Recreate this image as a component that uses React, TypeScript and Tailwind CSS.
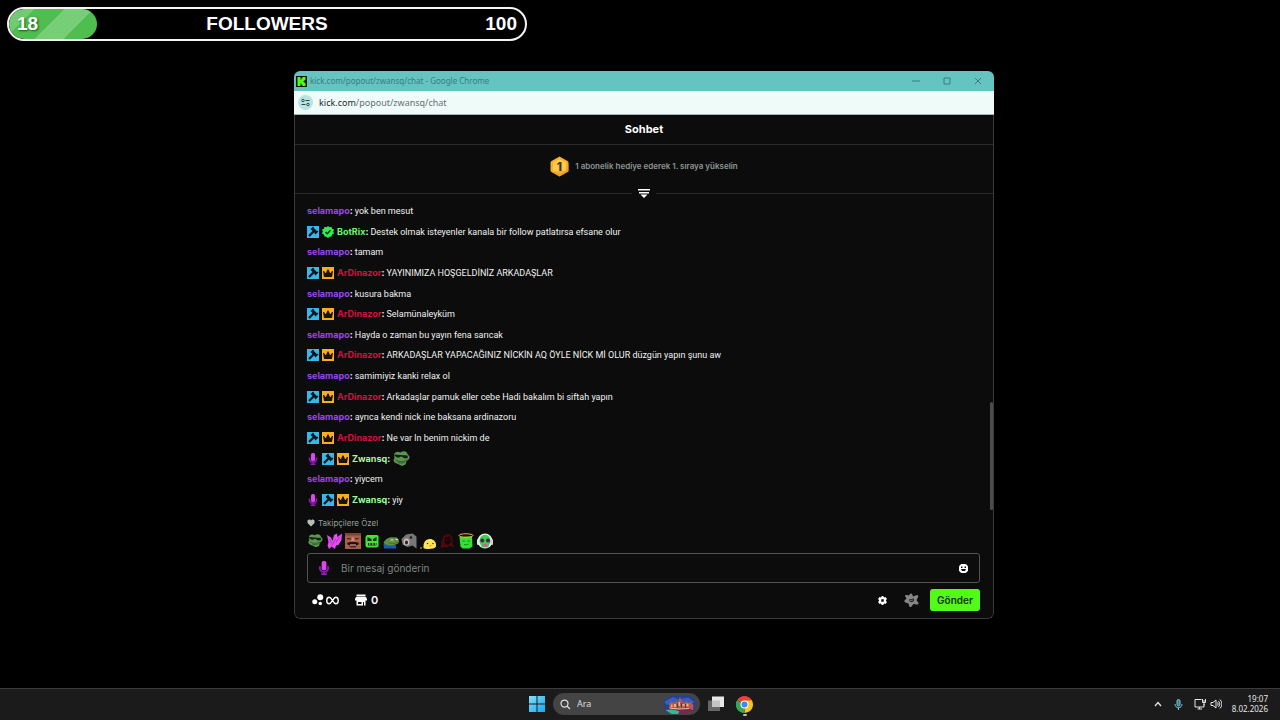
import type { ReactNode } from "react";

type User = "selamapo" | "BotRix" | "ArDinazor" | "Zwansq";

const USERS: Record<User, { color: string; badges: ReactNode }> = {
  selamapo: { color: "text-[#9b45f0]", badges: null },
  BotRix: {
    color: "text-[#6bf76b]",
    badges: (
      <>
        <ModBadge />
        <VerifiedBadge />
      </>
    ),
  },
  ArDinazor: {
    color: "text-[#d30f42]",
    badges: (
      <>
        <ModBadge />
        <CrownBadge />
      </>
    ),
  },
  Zwansq: {
    color: "text-[#a5f9a0]",
    badges: (
      <>
        <MicIcon className="h-3 w-3" />
        <ModBadge />
        <CrownBadge />
      </>
    ),
  },
};

const MESSAGES: { user: User; text: ReactNode }[] = [
  { user: "selamapo", text: "yok ben mesut" },
  { user: "BotRix", text: "Destek olmak isteyenler kanala bir follow patlatırsa efsane olur" },
  { user: "selamapo", text: "tamam" },
  { user: "ArDinazor", text: "YAYINIMIZA HOŞGELDİNİZ ARKADAŞLAR" },
  { user: "selamapo", text: "kusura bakma" },
  { user: "ArDinazor", text: "Selamünaleyküm" },
  { user: "selamapo", text: "Hayda o zaman bu yayın fena sarıcak" },
  { user: "ArDinazor", text: "ARKADAŞLAR YAPACAĞINIZ NİCKİN AQ ÖYLE NİCK Mİ OLUR düzgün yapın şunu aw" },
  { user: "selamapo", text: "samimiyiz kanki relax ol" },
  { user: "ArDinazor", text: "Arkadaşlar pamuk eller cebe Hadi bakalım bi siftah yapın" },
  { user: "selamapo", text: "ayrıca kendi nick ine baksana ardinazoru" },
  { user: "ArDinazor", text: "Ne var ln benim nickim de" },
  { user: "Zwansq", text: <Frog className="h-[18px] w-[18px]" /> },
  { user: "selamapo", text: "yiycem" },
  { user: "Zwansq", text: "yiy" },
];

function ModBadge() {
  return (
    <svg className="h-3 w-3 shrink-0" viewBox="0 0 24 24" aria-hidden="true">
      <path d="M0 0h24v24H0z" fill="#35b8ea" />
      <path d="M4 20 14 10" stroke="#07151d" strokeWidth="4.500" />
      <path d="M10.500 5 19 13.500" stroke="#07151d" strokeWidth="6" />
      <path d="m8 7 5-5M16 16l6-6" stroke="#07151d" strokeWidth="2.500" />
    </svg>
  );
}

function CrownBadge() {
  return (
    <svg className="h-3 w-3 shrink-0" viewBox="0 0 24 24" aria-hidden="true">
      <path d="M0 0h24v24H0z" fill="#fbae1c" />
      <path d="M2 8h2l3 4h1l3-7h2l3 7h1l3-4h2l-1 6-1 6H4L3 14z" fill="#1b1204" />
    </svg>
  );
}

function VerifiedBadge() {
  return (
    <svg className="h-3 w-3 shrink-0" viewBox="0 0 24 24" aria-hidden="true">
      <path d="m12 0 3 2.500 4-1 1 4 4 1.500-1.500 4L24 15l-4 2-1 4-4 .500L12 24l-3-2.500L5 21l-1-4-4-2 1.500-4L0 7l4-1.500 1-4 4 1z" fill="#2bee55" />
      <path d="m7 12 3.500 3.500L17 8.500" fill="none" stroke="#08350f" strokeWidth="3" />
    </svg>
  );
}

function MicIcon({ className }: { className: string }) {
  return (
    <svg className={`${className} shrink-0`} viewBox="0 0 24 24" aria-hidden="true">
      <path d="M5 9v5l3 4h8l3-4V9" fill="none" stroke="#8d1bb5" strokeWidth="3" />
      <path d="M10.500 17h3v4H17v3H7v-3h3.500z" fill="#8d1bb5" />
      <rect x="8" y="0" width="8" height="16" rx="3" fill="#dc48ee" />
    </svg>
  );
}

function Frog({ className }: { className: string }) {
  return (
    <svg className={className} viewBox="0 0 36 36" aria-hidden="true">
      <path d="M4 9C6 3 12 2 17 5c5-4 13-3 14 3l4 5c1 4-3 7-6 9l-2 7-7 3-8-4C6 26 3 24 3 20l2-4z" fill="#5b9650" />
      <path d="M3 9l28 2 1 4c-4 3-9 2-11-1l-4-1c-2 3-7 3-10 0z" fill="#132015" />
      <path d="M7 20c8 5 16 4 26-1M12 25c5 2 10 1 14-1" fill="none" stroke="#34592c" strokeWidth="2" />
    </svg>
  );
}

const EMOTES: { name: string; art: ReactNode }[] = [
  { name: "Havalı kurbağa", art: <Frog className="h-full w-full" /> },
  {
    name: "Kelebek",
    art: (
      <svg viewBox="0 0 32 32">
        <path d="M2 4l8 5 3 7 3-12 6-3 1 7 9-7-1 13-6 10-5 1-2 7-7-5-5 5-3-7 2-6z" fill="#e44cf0" />
        <path d="M12 25 19 12M7 12l4 9M27 8l-7 11" stroke="#a833b5" strokeWidth="2" />
      </svg>
    ),
  },
  {
    name: "Gülen adam",
    art: (
      <svg viewBox="0 0 32 32">
        <path d="M0 0h32v32H0z" fill="#a45f4e" />
        <path d="M0 0h32v5H0z" fill="#7a463a" />
        <path d="M4 11l8 1M19 12l8-1" stroke="#35150f" strokeWidth="2" />
        <path d="M14 9h4l2 8h-8z" fill="#cf8770" />
        <path d="M4 20q12-5 24 0l-2 4H6z" fill="#28100e" />
        <path d="M8 24h16l-3 5H11z" fill="#5d1f1c" />
        <path d="M10 23h12v2H10z" fill="#dbbfae" />
      </svg>
    ),
  },
  {
    name: "Kızgın küp",
    art: (
      <svg viewBox="0 0 32 32">
        <path d="M6 4h21l2 3v20l-4 2H6l-3-3V8z" fill="#3fe637" />
        <path d="M7 8l8 4v4H7zM25 8l-7 4v4h7zM8 20h17v5H8z" fill="#092c0b" />
        <path d="M10 21h3v2h-3zM16 21h3v2h-3zM22 21h2v2h-2z" fill="#e8ffe8" />
      </svg>
    ),
  },
  {
    name: "Üzgün kurbağa",
    art: (
      <svg viewBox="0 0 32 32">
        <path d="M1 22c6-4 13-3 25 3v6H2z" fill="#1c58b4" />
        <path d="M1 20C4 12 13 7 22 9c7-2 10 3 10 9-2 6-18 9-27 5z" fill="#5b923f" />
        <path d="M15 13h6v2h-6zM25 12h5v2h-5z" fill="#d5decb" />
        <path d="M11 20q9 3 20-1" stroke="#8a4c35" strokeWidth="2" fill="none" />
      </svg>
    ),
  },
  {
    name: "Bağıran balık",
    art: (
      <svg viewBox="0 0 32 32">
        <path d="M1 12 10 3l13-2 8 6v24l-8-6-10 3-10-5z" fill="#77777a" />
        <ellipse cx="11" cy="18" rx="6" ry="7" fill="#c9b8b8" />
        <ellipse cx="11" cy="19" rx="3" ry="4" fill="#301d20" />
        <circle cx="20" cy="9" r="2.500" fill="#18181a" />
      </svg>
    ),
  },
  {
    name: "Civciv",
    art: (
      <svg viewBox="0 0 32 32">
        <path d="M7 30C6 19 11 12 20 12c8 0 13 7 12 15-3 6-21 6-25 3z" fill="#ffe552" />
        <circle cx="15" cy="21" r="1.500" fill="#35280c" />
        <circle cx="26" cy="21" r="1.500" fill="#35280c" />
        <path d="M18 24h6l-3 3z" fill="#ef9a2c" />
        <circle cx="2" cy="30" r="1.500" fill="#ffe552" />
      </svg>
    ),
  },
  {
    name: "Kırmızı kukuleta",
    art: (
      <svg viewBox="0 0 32 32">
        <path d="M3 29c2-9 1-12 4-19C9 4 15 1 21 3c7 3 7 12 6 17l4 9-9-3-9 3z" fill="#4c070f" />
        <path d="M12 9l10-2 3 10-7 7-7-4z" fill="#140305" />
        <path d="M14 14h2M21 14h2" stroke="#7c0d1a" strokeWidth="2" />
      </svg>
    ),
  },
  {
    name: "Melek",
    art: (
      <svg viewBox="0 0 32 32">
        <path d="M3 8l25-1 1 20-6 4H9l-4-4z" fill="#35df35" />
        <ellipse cx="16" cy="5" rx="14" ry="3.500" fill="none" stroke="#e2b650" strokeWidth="2" />
        <path d="M9 16h5M19 16h5M12 23q5 2 9-1" stroke="#148a1c" strokeWidth="2" fill="none" />
      </svg>
    ),
  },
  {
    name: "Kulaklıklı",
    art: (
      <svg viewBox="0 0 32 32">
        <circle cx="16" cy="16" r="15" fill="#e7f4e9" />
        <path d="M7 8q9-9 18 0l3 9-6 12H10L4 17z" fill="#39cf4f" />
        <circle cx="10.500" cy="15" r="4" fill="#51204e" />
        <circle cx="22" cy="15" r="4" fill="#51204e" />
        <path d="M12 22h9l-2 6h-5z" fill="#e84fad" />
        <rect x="0" y="12" width="5" height="12" rx="2" fill="#d0f5df" />
        <rect x="27" y="12" width="5" height="12" rx="2" fill="#e8c2e3" />
      </svg>
    ),
  },
];

function GoalBar() {
  return (
    <section
      aria-label="Followers"
      className="relative grid h-[34px] w-[520px] max-w-full grid-cols-[1fr_auto_1fr] items-center overflow-hidden rounded-full border-2 border-[#f4f4f4] bg-black px-2 text-[19px] leading-6 font-bold text-white"
      style={{ fontFamily: '"Liberation Sans", Arial, sans-serif' }}
    >
      <div className="absolute inset-y-0 left-0 w-[88px] rounded-full bg-[repeating-linear-gradient(135deg,#72ca72_0px,#72ca72_18px,#4fbd50_18px,#4fbd50_39px,#76cf76_39px,#76cf76_60px,#4fbd50_60px,#4fbd50_81px)]" />
      <span className="relative [text-shadow:1px_1px_2px_#1c551c]">18</span>
      <span className="relative">FOLLOWERS</span>
      <span className="relative text-right">100</span>
    </section>
  );
}

function TitleBar() {
  return (
    <header style={{ fontFamily: '"Noto Sans", "Open Sans", sans-serif' }}>
      <div className="flex h-5 items-center bg-[#65c3c0] pr-px pl-0.5 text-[#34817f]">
        <svg className="mr-[3px] h-[11px] w-[11px]" viewBox="0 0 22 22" aria-hidden="true">
          <path d="M0 0h22v22H0z" fill="#061507" />
          <path d="M3 2h6v5h2V4h2V2h6v6h-2v2h-2v2h2v2h2v6h-6v-2h-2v-3H9v5H3z" fill="#53fc18" />
        </svg>
        <span className="text-[8px] leading-3">kick.com/popout/zwansq/chat - Google Chrome</span>
        <div className="ml-auto flex">
          <button aria-label="Simge durumuna küçült" className="flex h-5 w-[31px] items-center justify-center">
            <svg className="h-2 w-2" viewBox="0 0 8 8"><path d="M0 4h8" stroke="currentColor" /></svg>
          </button>
          <button aria-label="Ekranı kapla" className="flex h-5 w-[31px] items-center justify-center">
            <svg className="h-2 w-2" viewBox="0 0 8 8"><path d="M1 1h6v6H1z" fill="none" stroke="currentColor" /></svg>
          </button>
          <button aria-label="Kapat" className="flex h-5 w-[31px] items-center justify-center">
            <svg className="h-2 w-2" viewBox="0 0 8 8"><path d="m1 1 6 6M7 1 1 7" stroke="currentColor" /></svg>
          </button>
        </div>
      </div>
      <div className="flex h-6 items-center gap-1.5 border-b border-[#9fb8b3] bg-[#effbf9] px-1 text-[9px] leading-4 text-[#66716f]">
        <button aria-label="Site bilgileri" className="flex h-[15px] w-[15px] items-center justify-center rounded-full bg-[#b9e3df]">
          <svg className="h-[9px] w-[9px]" viewBox="0 0 18 18" fill="none" stroke="#254d4d" strokeWidth="2">
            <circle cx="4" cy="5" r="2.500" />
            <path d="M9 5h8M1 13h8" />
            <circle cx="14" cy="13" r="2.500" />
          </svg>
        </button>
        <span>
          <span className="text-[#202827]">kick.com</span>/popout/zwansq/chat
        </span>
      </div>
    </header>
  );
}

function Leaderboard() {
  return (
    <section className="flex h-[42px] items-center justify-center gap-1.5 text-[8px] leading-4 font-semibold text-[#8e9696]">
      <svg className="h-[21px] w-[19px]" viewBox="0 0 38 42" aria-hidden="true">
        <path d="m19 1 16 9q2 1 2 3v16q0 2-2 3l-16 9-16-9q-2-1-2-3V13q0-2 2-3z" fill="#f6ae27" />
        <path d="m19 6 13 7v16l-13 7-13-7V13z" fill="#ffcb4d" />
        <path d="M37 29q0 2-2 3l-16 9-16-9 29-3 5-14z" fill="#e99a1c" opacity=".6" />
        <text x="19" y="30" textAnchor="middle" fontSize="24" fontWeight="800" fill="#48300b">1</text>
      </svg>
      <span>1 abonelik hediye ederek 1. sıraya yükselin</span>
    </section>
  );
}

function Composer() {
  return (
    <form className="pr-[13px] pl-3" onSubmit={(e) => e.preventDefault()}>
      <div className="flex items-center gap-[3px] text-[8px] leading-3 text-[#9a9d9d]">
        <svg className="h-2 w-2" viewBox="0 0 16 16" fill="#b9bcbc" aria-hidden="true">
          <path d="M8 15 1 8V3l3-2h2l2 2 2-2h2l3 2v5z" />
        </svg>
        Takipçilere Özel
      </div>
      <div className="mt-1 flex w-[186px] justify-between">
        {EMOTES.map((emote) => (
          <button key={emote.name} type="button" aria-label={emote.name} className="h-4 w-4">
            {emote.art}
          </button>
        ))}
      </div>
      <div className="mt-1 flex h-[30px] items-center rounded-[3px] border border-[#525454] px-[9px]">
        <MicIcon className="h-3.5 w-3.5" />
        <input
          aria-label="Bir mesaj gönderin"
          placeholder="Bir mesaj gönderin"
          className="ml-2.5 h-6 min-w-0 flex-1 bg-transparent text-[10px] text-white outline-none placeholder:text-[#808585]"
        />
        <button type="button" aria-label="İfadeler" className="mr-0.5">
          <svg className="h-[9px] w-[9px]" viewBox="0 0 18 18">
            <path d="M5 0h8l3 2 2 3v8l-2 3-3 2H5l-3-2-2-3V5l2-3z" fill="#fff" />
            <path d="M4 5h3v3H4zM11 5h3v3h-3zM4 10h10l-2 4H6z" fill="#0b0c0b" />
          </svg>
        </button>
      </div>
      <div className="mt-1.5 flex h-[22px] items-center text-white">
        <svg className="ml-[5px] h-3 w-3" viewBox="0 0 24 24" fill="currentColor" aria-hidden="true">
          <circle cx="16.500" cy="6.500" r="6" />
          <circle cx="5.500" cy="15.500" r="5" />
          <circle cx="16.500" cy="19" r="3.500" />
        </svg>
        <svg className="ml-0.5 h-[9px] w-[13px]" viewBox="0 0 26 18" fill="none" stroke="currentColor" strokeWidth="2.800" role="img" aria-label="Sınırsız">
          <path d="M13 9C10.500 5 9 2.500 6.500 2.500a5 6.500 0 0 0 0 13C9 15.500 10.500 13 13 9s4-6.500 6.500-6.500a5 6.500 0 0 1 0 13C17 15.500 15.500 13 13 9z" />
        </svg>
        <svg className="ml-4 h-3 w-3" viewBox="0 0 24 24" fill="currentColor" fillRule="evenodd" aria-hidden="true">
          <path d="M3 1h18v4H3zM2 6h20l2 4v3H0v-3zM3 13h18v10H3zM6 16v4h7v-4zM16 16v7h2v-7z" />
        </svg>
        <span className="ml-1 text-[11px] leading-4 font-semibold">0</span>
        <button type="button" aria-label="Sohbet ayarları" className="ml-auto">
          <svg className="h-[9px] w-[9px]" viewBox="0 0 18 18" fill="currentColor" fillRule="evenodd">
            <path d="M7 0h4v2l2 1 2-1 3 4-2 2v2l2 2-3 4-2-1-2 1v2H7v-2l-2-1-2 1-3-4 2-2V8L0 6l3-4 2 1 2-1zM6.500 6.500v5h5v-5z" />
          </svg>
        </button>
        <button type="button" aria-label="Moderatör araçları" className="ml-[17px]">
          <svg className="h-[15px] w-[15px]" viewBox="0 0 30 30">
            <path d="M11 3q4-4 6 1l1 3 8-3q4 1 2 5l-3 5 4 6q1 4-4 3l-6-1-4 5q-4 3-5-2l-1-4-6-2q-4-2-1-5l3-3-3-5q0-3 4-2l4 1z" fill="#858787" />
            <path d="m10 13 10-2q1 6-4 7-5 1-6-5z" fill="#161717" />
            <path d="m12 14 7-1-1 2-5 1z" fill="#858787" />
          </svg>
        </button>
        <button type="submit" className="ml-[11px] h-[22px] w-[50px] rounded-[3px] bg-[#53fc18] text-[10px] leading-4 font-semibold text-[#0c3202]">
          Gönder
        </button>
      </div>
    </form>
  );
}

function ChatWindow() {
  return (
    <main
      className="w-[700px] max-w-full overflow-hidden rounded-md"
      style={{ fontFamily: 'Inter, "Liberation Sans", sans-serif' }}
    >
      <TitleBar />
      <div className="relative rounded-b-md border-x border-b border-[#3a3c3c] bg-[#0b0c0b] pb-[7px]">
        <h1 className="h-[30px] border-b border-[#2a2c2c] text-center text-[11px] leading-7 font-bold text-white">Sohbet</h1>
        <Leaderboard />
        <div className="flex h-3 items-center gap-1.5">
          <hr className="flex-1 border-[#2a2c2c]" />
          <button aria-label="Sıralamayı genişlet" className="text-white">
            <svg className="h-3 w-3" viewBox="0 0 12 12" fill="currentColor">
              <path d="M0 2h12v1.500H0zM1 5h10v1.500H1zM2.500 7.500h7L6 11z" />
            </svg>
          </button>
          <hr className="flex-1 border-[#2a2c2c]" />
        </div>
        <ul className="mt-1 flex h-[305px] flex-col justify-between pr-[13px] pl-3 text-[9px] leading-4 text-[#f1f2f2]">
          {MESSAGES.map(({ user, text }, i) => (
            <li key={i} className="flex h-4 items-center">
              <span className="flex items-center gap-[3px]">
                {USERS[user].badges}
                <span className="font-bold">
                  <span className={USERS[user].color}>{user}</span>:
                </span>
              </span>
              <span className="ml-0.5 font-[Roboto]">{text}</span>
            </li>
          ))}
        </ul>
        <div className="mt-[9px]">
          <Composer />
        </div>
        <div className="absolute right-0 bottom-[108px] h-[108px] w-[3px] rounded-full bg-[#4b4d4d]" />
      </div>
    </main>
  );
}

function Taskbar() {
  return (
    <footer
      className="mt-auto grid h-8 grid-cols-[1fr_auto_1fr] items-center border-t border-[#3c3c3c] bg-[#1b1b1b] pb-px text-[#e6e6e6]"
      style={{ fontFamily: '"Noto Sans", "Open Sans", sans-serif' }}
    >
      <div />
      <div className="flex items-center pl-0.5">
        <button aria-label="Başlat">
          <svg className="h-4 w-4" viewBox="0 0 32 32">
            <defs>
              <linearGradient id="start" x1="0" y1="0" x2="1" y2="1">
                <stop offset="0" stopColor="#83e1fb" />
                <stop offset="1" stopColor="#18a6ed" />
              </linearGradient>
            </defs>
            <path d="M0 0h15v15H0zM17 0h15v15H17zM0 17h15v15H0zM17 17h15v15H17z" fill="url(#start)" />
          </svg>
        </button>
        <label className="ml-2 flex h-[22px] w-[147px] items-center overflow-hidden rounded-full bg-[#444444] pl-[7px]">
          <svg className="h-[11px] w-[11px] shrink-0" viewBox="0 0 22 22" fill="none" stroke="#dedede" strokeWidth="2.500">
            <circle cx="9" cy="9" r="7" />
            <path d="m14 14 6 6" />
          </svg>
          <input aria-label="Ara" placeholder="Ara" className="ml-1.5 min-w-0 flex-1 bg-transparent text-[9px] leading-4 outline-none placeholder:text-[#dddddd]" />
          <svg className="mr-1 h-[19px] w-[32px] shrink-0" viewBox="0 0 64 38" aria-hidden="true">
            <path d="M0 10 12 3 30 0l22 2 10 9 2 14-10 10-18 3H17L1 31z" fill="#263f92" />
            <path d="m1 13 17-9 12 5 18-4 13 9-8 5H4z" fill="#385fc0" />
            <path d="m10 25 1-9 5-3 4 4 4-5 4 4 2-8 2-5 2 6 4 7 6-3 5 3 5-2 5 7-1 9-7 6H13z" fill="#b9584a" />
            <path d="M14 19h3v5h-3zM20 18h4v6h-4zM29 14h3v8h-3zM37 18h4v4h-4zM45 17h4v6h-4z" fill="#efb07b" />
            <path d="M26 17h2v9h-2zM34 16h2v9h-2zM42 18h2v8h-2z" fill="#6d2c48" />
            <path d="m4 27 20 2 22-4 13 6-12 6-24 1z" fill="#7d2549" />
            <path d="M3 30q15-3 28 3l-3 5H15z" fill="#35b79b" />
            <path d="m12 26 18 2 20-1" stroke="#efc099" strokeWidth="2" fill="none" />
          </svg>
        </label>
        <button aria-label="Görev görünümü" className="ml-2">
          <svg className="h-4 w-4" viewBox="0 0 32 32">
            <path d="M0 9h24v21H0z" fill="#666666" />
            <path d="M8 1h24v21H8z" fill="#e8e8e8" />
            <path d="M8 9h16v13H8z" fill="#c4c4c4" />
          </svg>
        </button>
        <button aria-label="Google Chrome" className="relative ml-3">
          <svg className="h-[17px] w-[17px]" viewBox="0 0 34 34">
            <path d="M17 17 2.300 8.500A17 17 0 0 1 31.700 8.500z" fill="#e94335" />
            <path d="M17 17 31.700 8.500A17 17 0 0 1 17 34z" fill="#fcc519" />
            <path d="M17 17v17A17 17 0 0 1 2.300 8.500z" fill="#34a853" />
            <path d="M17 9h14.700l.3.500-8 12L17 34l7-13z" fill="#fcc519" />
            <path d="M2.300 8.500 10 21l7 4-3 9A17 17 0 0 1 2.300 8.500z" fill="#34a853" />
            <circle cx="17" cy="17" r="8" fill="#fff" />
            <circle cx="17" cy="17" r="6" fill="#4285f4" />
          </svg>
          <span className="absolute -bottom-[3px] left-[7px] h-0.5 w-1 rounded-full bg-[#bbbbbb]" />
        </button>
      </div>
      <div className="flex items-center justify-end pr-3">
        <button aria-label="Gizli simgeler">
          <svg className="h-2 w-2" viewBox="0 0 8 8" fill="none" stroke="currentColor" strokeWidth="1.300"><path d="m1 6 3-3.500L7 6" /></svg>
        </button>
        <svg className="ml-[11px] h-[11px] w-[11px]" viewBox="0 0 22 22" fill="none" stroke="#7ec4d5" strokeWidth="2" role="img" aria-label="Mikrofon">
          <rect x="8" y="1" width="6" height="13" rx="3" fill="#3f7785" />
          <path d="M4 10c0 10 14 10 14 0M11 17v5" />
        </svg>
        <svg className="ml-2.5 h-3 w-3" viewBox="0 0 24 24" fill="none" stroke="currentColor" strokeWidth="2" role="img" aria-label="Ağ">
          <path d="M15 3H2v15h18v-6M7 22h9M11 18v4M17 2v4h6V2M17 6v3h6V6M20 9v6" />
        </svg>
        <svg className="ml-1 h-3 w-3" viewBox="0 0 24 24" fill="none" stroke="currentColor" strokeWidth="2" role="img" aria-label="Ses">
          <path d="M2 9h4l6-5v16l-6-5H2zM15 9q3 3 0 6M17 6q6 6 0 12M20 3q8 9 0 18" />
        </svg>
        <div className="ml-2.5 text-right text-[8px] leading-[10px]">
          <div>19:07</div>
          <div>8.02.2026</div>
        </div>
      </div>
    </footer>
  );
}

export default function App() {
  return (
    <div className="flex min-h-screen flex-col bg-black">
      <div className="px-[7px] pt-[7px]">
        <GoalBar />
      </div>
      <div className="flex justify-center pt-[30px] pb-4 pl-2">
        <ChatWindow />
      </div>
      <Taskbar />
    </div>
  );
}
